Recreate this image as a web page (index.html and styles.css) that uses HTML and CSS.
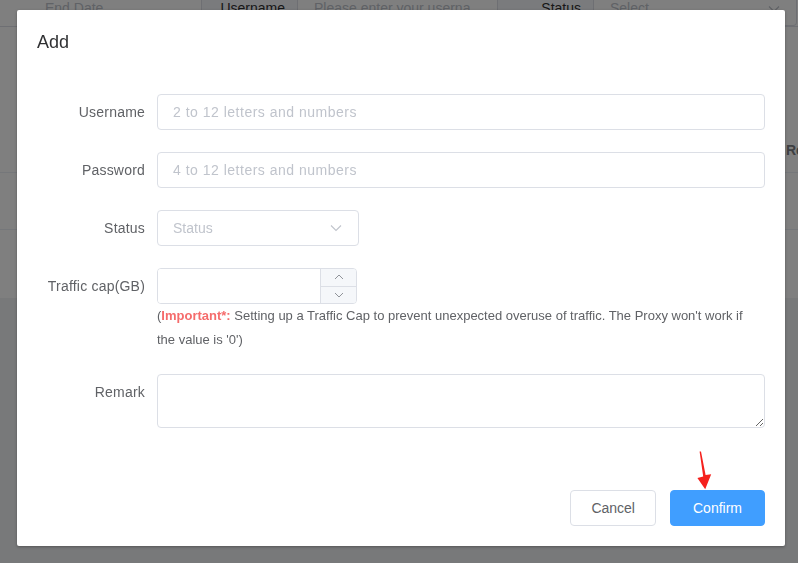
FILE: index.html
```html
<!DOCTYPE html>
<html>
<head>
<meta charset="utf-8">
<link rel="stylesheet" href="styles.css">
</head>
<body>
<div class="page">
  <div class="filters">
    <div class="f-cell f-date">End Date</div>
    <div class="f-cell f-label">Username</div>
    <div class="f-cell f-input">Please enter your userna</div>
    <div class="f-cell f-label">Status</div>
    <div class="f-cell f-select"><span>Select</span>
      <svg class="f-chev" width="12" height="8" viewBox="0 0 12 8"><path d="M1 1.5 L6 6.5 L11 1.5" fill="none" stroke="#c0c4cc" stroke-width="1.2"/></svg>
    </div>
  </div>
  <div class="table">
    <div class="thead"><span class="th-remark">Remark</span></div>
    <div class="trow"></div>
    <div class="trow trow-tall"></div>
  </div>
</div>

<div class="overlay"></div>

<div class="dialog">
  <div class="dialog-header"><span class="dialog-title">Add</span></div>
  <div class="dialog-body">
    <div class="form">
      <div class="form-item">
        <label class="form-label">Username</label>
        <div class="form-content"><input class="input" type="text" placeholder="2 to 12 letters and numbers"></div>
      </div>
      <div class="form-item">
        <label class="form-label">Password</label>
        <div class="form-content"><input class="input" type="text" placeholder="4 to 12 letters and numbers"></div>
      </div>
      <div class="form-item">
        <label class="form-label">Status</label>
        <div class="form-content">
          <div class="select">
            <span class="select-placeholder">Status</span>
            <svg class="select-arrow" width="12" height="8" viewBox="0 0 12 8"><path d="M1 1.5 L6 6.5 L11 1.5" fill="none" stroke="#c0c4cc" stroke-width="1.1"/></svg>
          </div>
        </div>
      </div>
      <div class="form-item">
        <label class="form-label">Traffic cap(GB)</label>
        <div class="form-content">
          <div class="number">
            <input class="number-input" type="text">
            <div class="number-controls">
              <span class="number-btn"><svg width="10" height="6" viewBox="0 0 10 6"><path d="M1 5 L5 1 L9 5" fill="none" stroke="#909399" stroke-width="1"/></svg></span>
              <span class="number-btn"><svg width="10" height="6" viewBox="0 0 10 6"><path d="M1 1 L5 5 L9 1" fill="none" stroke="#909399" stroke-width="1"/></svg></span>
            </div>
          </div>
          <p class="hint">(<strong class="hint-strong">Important*:</strong> Setting up a Traffic Cap to prevent unexpected overuse of traffic. The Proxy won't work if the value is '0')</p>
        </div>
      </div>
      <div class="form-item">
        <label class="form-label">Remark</label>
        <div class="form-content"><textarea class="textarea" rows="2"></textarea></div>
      </div>
    </div>
  </div>
  <div class="dialog-footer">
    <button class="btn">Cancel</button>
    <button class="btn btn-primary">Confirm</button>
  </div>
  <svg class="pointer" width="26" height="44" viewBox="690 448 26 44"><polygon points="699.6,451.5 701,451.5 705.6,475 711.2,474.3 705.2,489.2 697.4,478 703.2,476.4" fill="#f5211d"/></svg>
</div>
</body>
</html>
```

FILE: styles.css
```css
* { box-sizing: border-box; }

html, body {
  margin: 0;
  padding: 0;
  width: 798px;
  height: 563px;
  overflow: hidden;
}

body {
  font-family: "Liberation Sans", Arial, sans-serif;
  font-size: 14px;
  color: #606266;
  background: #f0f2f5;
  position: relative;
}

/* ---------- background page ---------- */
.page {
  margin-top: -11px;
  background: #ffffff;
}

.filters {
  display: flex;
  height: 38px;
  border-bottom: 1px solid #dcdfe6;
}

.f-cell {
  display: flex;
  align-items: center;
  border-right: 1px solid #dcdfe6;
  white-space: nowrap;
  overflow: hidden;
  color: #c0c4cc;
}

.f-date { width: 202px; padding-left: 45px; }
.f-label { width: 96px; justify-content: flex-end; padding-right: 12px; color: #303133; background: #f5f7fa; }
.f-input { width: 200px; padding-left: 16px; }
.f-select {
  flex: 1;
  padding-left: 16px;
  padding-right: 16px;
  justify-content: space-between;
  border: 1px solid #dcdfe6;
  border-left: none;
  border-radius: 0 4px 4px 0;
  margin-right: 1px;
}
.f-chev { margin-top: 2px; }

.table {
  margin-top: 100px;
}

.thead {
  height: 46px;
  border-bottom: 1px solid #ebeef5;
  display: flex;
  align-items: center;
  padding-left: 786px;
  white-space: nowrap;
  overflow: hidden;
}

.th-remark {
  font-weight: bold;
  color: #7d7f84;
}

.trow {
  height: 57px;
  border-bottom: 1px solid #ebeef5;
}

.trow-tall {
  height: 68px;
  border-bottom: none;
}

/* ---------- overlay ---------- */
.overlay {
  position: fixed;
  inset: 0;
  background: rgba(0, 0, 0, 0.5);
}

/* ---------- dialog ---------- */
.dialog {
  position: absolute;
  left: 17px;
  top: 10px;
  width: 768px;
  background: #ffffff;
  border-radius: 2px;
  box-shadow: 0 1px 3px rgba(0, 0, 0, 0.3);
}

.dialog-header {
  padding: 20px 20px 10px;
}

.dialog-title {
  font-size: 18px;
  line-height: 24px;
  color: #303133;
  display: block;
}

.dialog-body {
  padding: 30px 20px;
}

.form-item {
  display: flex;
  margin-bottom: 22px;
}

.form-label {
  width: 120px;
  flex: none;
  padding-right: 12px;
  text-align: right;
  line-height: 36px;
  font-size: 14px;
  letter-spacing: 0.2px;
  color: #606266;
}

.form-content {
  flex: 1;
  min-width: 0;
}

.input {
  display: block;
  width: 100%;
  height: 36px;
  padding: 0 15px;
  border: 1px solid #dcdfe6;
  border-radius: 4px;
  font-family: "Liberation Sans", Arial, sans-serif;
  font-size: 14px;
  letter-spacing: 0.5px;
  color: #606266;
  outline: none;
  background: #fff;
}

.input::placeholder { color: #c0c4cc; }

.select {
  width: 202px;
  height: 36px;
  border: 1px solid #dcdfe6;
  border-radius: 4px;
  display: flex;
  align-items: center;
  justify-content: space-between;
  padding: 0 16px 0 15px;
}

.select-placeholder { color: #c0c4cc; }

.number {
  width: 200px;
  height: 36px;
  border: 1px solid #dcdfe6;
  border-radius: 4px;
  display: flex;
  overflow: hidden;
}

.number-input {
  flex: 1;
  min-width: 0;
  border: none;
  outline: none;
  padding: 0 15px;
  font-family: "Liberation Sans", Arial, sans-serif;
  font-size: 14px;
}

.number-controls {
  width: 36px;
  display: flex;
  flex-direction: column;
  border-left: 1px solid #dcdfe6;
  background: #f5f7fa;
}

.number-btn {
  flex: 1;
  display: flex;
  align-items: center;
  justify-content: center;
}

.number-btn + .number-btn {
  border-top: 1px solid #dcdfe6;
}

.hint {
  margin: 0;
  max-width: 596px;
  font-size: 13px;
  line-height: 24px;
  color: #606266;
}

.hint-strong {
  color: #f56c6c;
  font-weight: bold;
}

.textarea {
  display: block;
  width: 100%;
  height: 54px;
  padding: 5px 15px;
  border: 1px solid #dcdfe6;
  border-radius: 4px;
  font-family: "Liberation Sans", Arial, sans-serif;
  font-size: 14px;
  line-height: 1.5;
  outline: none;
  resize: vertical;
}

.dialog-footer {
  padding: 10px 20px 20px;
  display: flex;
  justify-content: flex-end;
  gap: 14px;
}

.btn {
  height: 36px;
  padding: 0 20px;
  border: 1px solid #dcdfe6;
  border-radius: 4px;
  background: #fff;
  color: #606266;
  font-family: "Liberation Sans", Arial, sans-serif;
  font-size: 14px;
  cursor: pointer;
}

.btn-primary {
  padding: 0 22px;
  background: #409eff;
  border-color: #409eff;
  color: #fff;
}

.pointer {
  position: absolute;
  left: 673px;
  top: 438px;
}
```
